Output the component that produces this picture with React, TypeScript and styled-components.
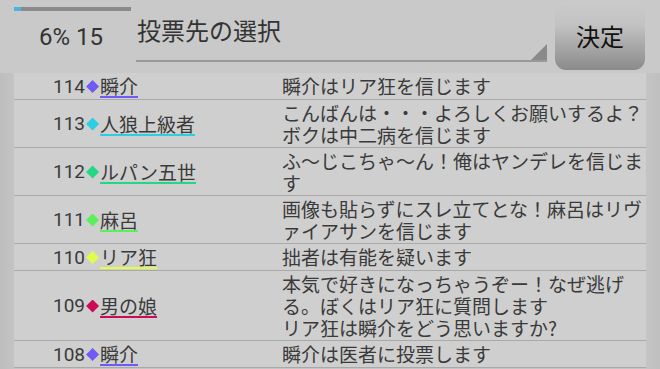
import React from "react";
import styled, { createGlobalStyle } from "styled-components";

const GlobalStyle = createGlobalStyle`
  html, body {
    margin: 0;
    padding: 0;
    background: #c9c9c9;
  }
  body {
    font-family: Roboto, "Noto Sans CJK JP", sans-serif;
    color: #3a3a3a;
  }
`;

const Screen = styled.div`
  width: 660px;
  height: 369px;
  overflow: hidden;
  display: flex;
  flex-direction: column;
  background: #c9c9c9;
`;

const Header = styled.header`
  height: 73px;
  flex-shrink: 0;
  display: flex;
  padding: 0 15px 0 14px;
  box-sizing: border-box;
`;

const Status = styled.div`
  width: 122px;
  display: flex;
  flex-direction: column;
`;

const Progress = styled.div`
  margin-top: 7px;
  width: 117px;
  height: 4px;
  background: #8a8a8a;
`;

const ProgressFill = styled.div`
  height: 100%;
  background: #4bb3df;
`;

const Count = styled.div`
  margin-top: 12px;
  padding-left: 25px;
  font-size: 24px;
  line-height: 28px;
  color: #333;
`;

const Spinner = styled.div`
  flex: 1;
  position: relative;
  height: 62px;
  box-sizing: border-box;
  padding: 18px 0 0 1px;
  border-bottom: 2px solid #999;
  font-size: 24px;
  line-height: 28px;
  color: #333;

  &::after {
    content: "";
    position: absolute;
    right: 0;
    bottom: 0;
    width: 0;
    height: 0;
    border-left: 16px solid transparent;
    border-bottom: 16px solid #8a8a8a;
  }
`;

const Button = styled.button`
  margin: 1px 0 0 8px;
  width: 90px;
  height: 69px;
  border: none;
  border-radius: 11px;
  background: linear-gradient(#cbcbcb, #c2c2c2 35%, #8a8a8a);
  font-family: "Noto Sans CJK JP", sans-serif;
  font-size: 24px;
  color: #111;
  padding: 0;
`;

const Body = styled.div`
  flex: 1;
  padding: 0 14px;
  background: linear-gradient(to right, #bdbdbd, #c4c4c4 14px, #c4c4c4 calc(100% - 14px), #bfbfbf);
`;

const Table = styled.div`
  background: #cfcfcf;
  display: flex;
  flex-direction: column;
`;

const Row = styled.div`
  display: grid;
  grid-template-columns: 268px 1fr;
  padding: 2px 0 1px;
  border-bottom: 1px solid #a9a9a9;
  font-size: 19px;
`;

const Speaker = styled.div`
  display: flex;
  align-items: center;
  padding-left: 39px;
`;

const No = styled.span`
  font-family: Roboto, sans-serif;
  line-height: 22px;
`;

const Diamond = styled.span<{ $color: string }>`
  display: inline-block;
  width: 13px;
  height: 13px;
  margin: 0 1px;
  background: ${(p) => p.$color};
  clip-path: polygon(50% 0, 100% 50%, 50% 100%, 0 50%);
`;

const Name = styled.span<{ $color: string }>`
  display: inline-block;
  line-height: 21px;
  font-family: "Noto Sans CJK JP", sans-serif;
  border-bottom: 2px solid ${(p) => p.$color};
`;

const Message = styled.div`
  font-family: "Noto Sans CJK JP", sans-serif;
  line-height: 22px;
  white-space: pre-line;
`;

const posts = [
  { no: 114, name: "瞬介", color: "#6e5af4", text: "瞬介はリア狂を信じます" },
  {
    no: 113,
    name: "人狼上級者",
    color: "#2ccfe2",
    text: "こんばんは・・・よろしくお願いするよ？ボクは中二病を信じます",
  },
  {
    no: 112,
    name: "ルパン五世",
    color: "#22d884",
    text: "ふ～じこちゃ～ん！俺はヤンデレを信じます",
  },
  {
    no: 111,
    name: "麻呂",
    color: "#5cef5c",
    text: "画像も貼らずにスレ立てとな！麻呂はリヴァイアサンを信じます",
  },
  { no: 110, name: "リア狂", color: "#e2fc48", text: "拙者は有能を疑います" },
  {
    no: 109,
    name: "男の娘",
    color: "#cc0a55",
    text: "本気で好きになっちゃうぞー！なぜ逃げる。ぼくはリア狂に質問します\nリア狂は瞬介をどう思いますか?",
  },
  { no: 108, name: "瞬介", color: "#6e5af4", text: "瞬介は医者に投票します" },
];

const App: React.FC = () => {
  const progress = 6;
  return (
    <>
      <GlobalStyle />
      <Screen>
        <Header>
          <Status>
            <Progress>
              <ProgressFill style={{ width: `${progress}%` }} />
            </Progress>
            <Count>{progress}% 15</Count>
          </Status>
          <Spinner>投票先の選択</Spinner>
          <Button>決定</Button>
        </Header>
        <Body>
          <Table>
            {posts.map((item) => (
              <Row key={item.no}>
                <Speaker>
                  <No>{item.no}</No>
                  <Diamond $color={item.color} />
                  <Name $color={item.color}>{item.name}</Name>
                </Speaker>
                <Message>{item.text}</Message>
              </Row>
            ))}
          </Table>
        </Body>
      </Screen>
    </>
  );
};

export default App;
